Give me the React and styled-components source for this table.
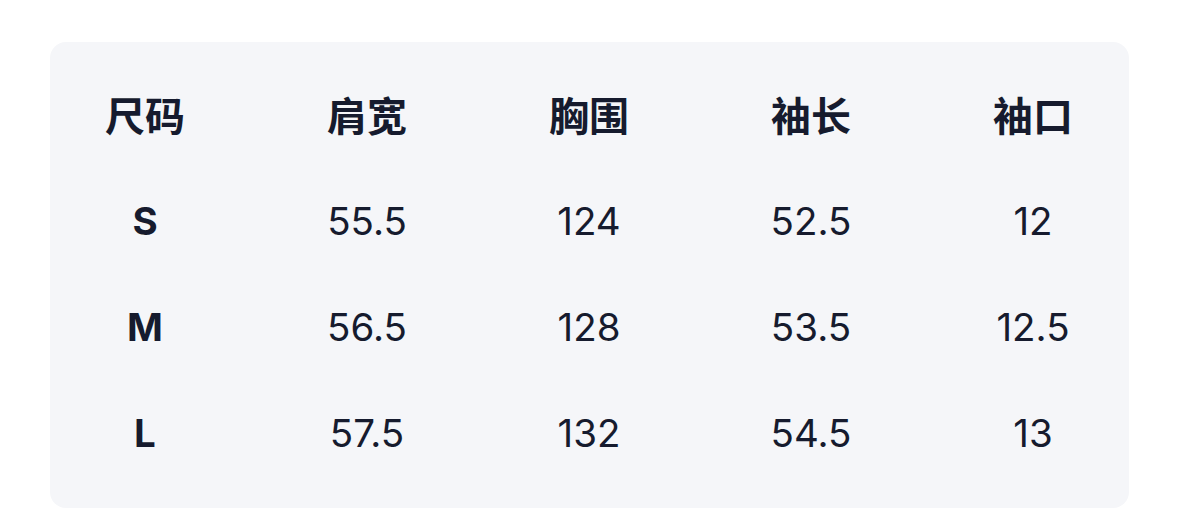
import React from "react";
import styled, { createGlobalStyle } from "styled-components";

const Global = createGlobalStyle`
  html, body { margin: 0; padding: 0; background: #ffffff; }
  body { font-family: Inter, "Noto Sans CJK SC", sans-serif; }
`;

const Page = styled.div`
  padding: 42px 50px 10px;
`;

const Card = styled.div`
  background: #f5f6f9;
  border-radius: 16px;
  padding: 21px 20px;
`;

const Row = styled.div`
  display: grid;
  grid-template-columns: repeat(5, 150px);
  column-gap: 72px;
  height: 106px;
  align-items: center;
`;

const Cell = styled.div`
  text-align: center;
  color: #161b2e;
  font-family: ${(p) => (p.$cjk ? '"Noto Sans CJK SC", sans-serif' : 'Inter, "Noto Sans CJK SC", sans-serif')};
  font-size: ${(p) => (p.$cjk ? "40px" : "38.5px")};
  font-weight: ${(p) => (p.$bold ? 700 : 400)};
  line-height: 1;
  padding-bottom: ${(p) => (p.$cjk ? "4px" : "2px")};
`;

const header = ["尺码", "肩宽", "胸围", "袖长", "袖口"];
const rows = [
  ["S", "55.5", "124", "52.5", "12"],
  ["M", "56.5", "128", "53.5", "12.5"],
  ["L", "57.5", "132", "54.5", "13"],
];

export default function App() {
  return (
    <Page>
      <Global />
      <Card>
        <Row>
          {header.map((h) => (
            <Cell key={h} $cjk $bold>
              {h}
            </Cell>
          ))}
        </Row>
        {rows.map((r) => (
          <Row key={r[0]}>
            {r.map((v, i) => (
              <Cell key={i} $bold={i === 0}>
                {v}
              </Cell>
            ))}
          </Row>
        ))}
      </Card>
    </Page>
  );
}
